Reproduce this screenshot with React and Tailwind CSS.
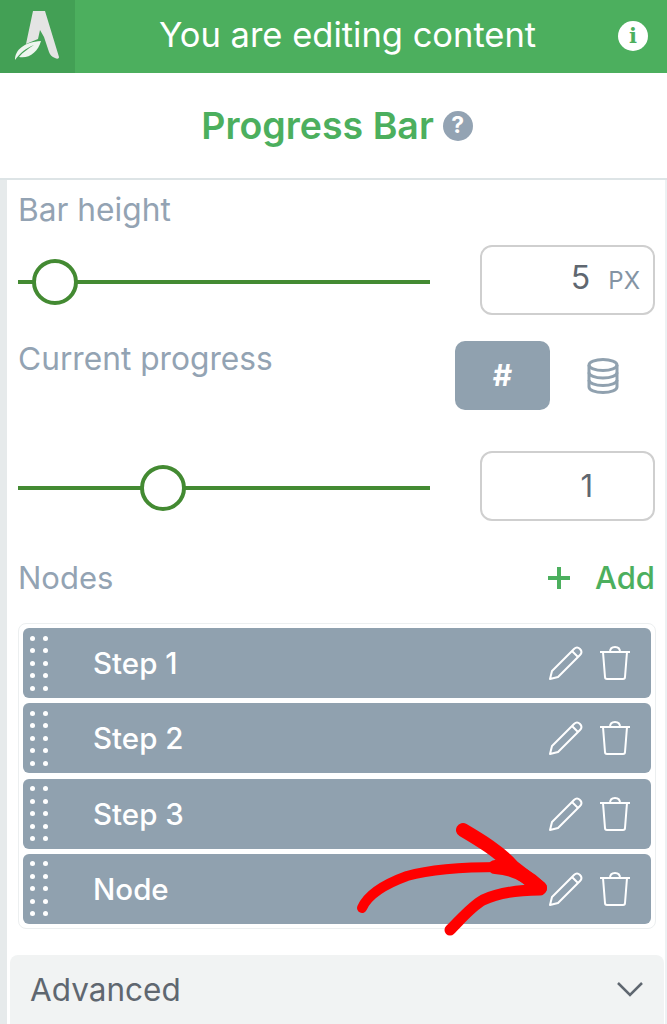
import React from 'react';

const nodes = ['Step 1', 'Step 2', 'Step 3', 'Node'];

const Logo = () => (
  <svg width="75" height="73" viewBox="0 0 75 73">
    <path d="M33 11H45L59 57C59 59 57 59 55 58C52 57 50 55 49 52L44 37L40 30L38 39L26 44Z" fill="#e4e4e4" />
    <path d="M15 60C15 50 24 42 41 41C38 52 29 59 19 57C23 52 28 49 34 45C26 48 20 53 15 60Z" fill="#eef5ef" />
  </svg>
);

const Slider = ({ left }) => (
  <div className="relative w-[412px] h-[4px] mt-[4px] bg-[#438a32]">
    <div className={`absolute top-[-21px] ${left} w-[46px] h-[46px] rounded-full bg-white border-[4px] border-[#438a32]`} />
  </div>
);

const Pencil = () => (
  <svg width="36" height="36" viewBox="0 0 36 36" fill="none" stroke="white" strokeWidth="2" strokeLinejoin="round">
    <path d="M2 34L4 26L26 4C28 2 30 2 32 4C34 6 34 8 32 10L10 32Z" />
    <path d="M24 6L30 12" />
  </svg>
);

const Trash = () => (
  <svg width="32" height="34" viewBox="0 0 32 34" fill="none" stroke="white" strokeWidth="2" strokeLinejoin="round">
    <path d="M1 6H31" />
    <path d="M4 6L6 31C6 32 7 33 8 33H24C25 33 26 32 26 31L28 6" />
    <path d="M11 6C11 2 13 1 16 1C19 1 21 2 21 6" />
  </svg>
);

const Dots = () => (
  <div className="grid grid-cols-2 gap-x-[8px] gap-y-[7.5px] w-[18px]">
    {Array.from({ length: 10 }).map((_, i) => (
      <span key={i} className="w-[5px] h-[5px] rounded-full bg-white" />
    ))}
  </div>
);

const App = () => {
  return (
    <div className="relative w-[667px] h-[1024px] overflow-hidden bg-white font-['Inter',sans-serif]">
      {/* Top bar */}
      <div className="flex items-center h-[73px] bg-[#4caf5e]">
        <div className="w-[75px] h-full bg-[#43a055]">
          <Logo />
        </div>
        <div className="flex-1 pl-[84px] pb-[3px] text-[34.5px] text-white leading-none">You are editing content</div>
        <div className="flex items-center justify-center w-[30px] h-[30px] mr-[19px] mb-[2px] rounded-full bg-white font-['DejaVu_Serif',serif] font-bold text-[21px] text-[#4caf5e] leading-none">i</div>
      </div>

      {/* Title */}
      <div className="flex items-center justify-center gap-[9px] h-[105px] border-b-2 border-[#dde4e6] box-content -mb-[2px] pl-[7px]">
        <span className="text-[37.5px] font-semibold text-[#4caf5e] leading-none">Progress Bar</span>
        <span className="flex items-center justify-center w-[30px] h-[30px] rounded-full bg-[#93a3b3] text-white text-[23px] font-bold leading-none">?</span>
      </div>

      {/* Panel */}
      <div className="flex h-[846px] mt-[2px] border-r-2 border-[#edf1f3]">
        <div className="w-[7px] shrink-0 bg-[#e6eaeb]" />
        <div className="flex flex-col w-[637px] ml-[11px]">
          <div className="mt-[12px] text-[31.7px] text-[#93a3b3] leading-[36px]">Bar height</div>

          <div className="flex items-center justify-between mt-[17px]">
            <Slider left="left-[14px]" />
            <div className="flex items-baseline justify-end gap-[18px] w-[175px] h-[70px] pt-[11px] pr-[13px] border-2 border-[#cfcfcf] rounded-[12px] text-[#5f6770]">
              <span className="text-[32px] leading-[40px]">5</span>
              <span className="text-[24px] text-[#8494a4]">PX</span>
            </div>
          </div>

          <div className="flex justify-between mt-[26px]">
            <div className="text-[31.7px] text-[#93a3b3] leading-[36px]">Current progress</div>
            <div className="flex items-center">
              <div className="flex items-center justify-center w-[95px] h-[69px] rounded-[10px] bg-[#90a1af] text-white text-[30px] font-bold">#</div>
              <div className="flex items-center justify-center w-[105px] h-[69px]">
                <svg width="32" height="36" viewBox="0 0 32 36" fill="none" stroke="#90a1af" strokeWidth="3">
                  <ellipse cx="16" cy="7" rx="14" ry="5.5" />
                  <path d="M2 7V29C2 32 8 34.500 16 34.500C24 34.500 30 32 30 29V7" />
                  <path d="M2 14.500C2 17.500 8 20 16 20C24 20 30 17.500 30 14.500" />
                  <path d="M2 22C2 25 8 27.500 16 27.500C24 27.500 30 25 30 22" />
                </svg>
              </div>
            </div>
          </div>

          <div className="flex items-center justify-between mt-[41px]">
            <Slider left="left-[122px]" />
            <div className="flex items-center justify-end w-[175px] h-[70px] pr-[60px] border-2 border-[#cfcfcf] rounded-[12px] text-[31px] text-[#5f6770]">1</div>
          </div>

          <div className="flex items-center justify-between mt-[39px] h-[36px]">
            <div className="text-[31px] text-[#93a3b3]">Nodes</div>
            <div className="flex items-center gap-[23px] text-[#4caf5e]">
              <svg width="26" height="26" viewBox="0 0 26 26" stroke="#4caf5e" strokeWidth="4">
                <path d="M13 2V24M2 13H24" />
              </svg>
              <span className="text-[31px] font-medium">Add</span>
            </div>
          </div>

          {/* Node list */}
          <div className="flex flex-col gap-[5.33px] w-[638px] mt-[27px] p-[4px] border border-[#eceff0] rounded-[8px]">
            {nodes.map((n) => (
              <div key={n} className="flex items-center h-[70px] pl-[7px] pr-[20px] rounded-[6px] bg-[#90a1af]">
                <Dots />
                <span className="ml-[45px] flex-1 text-[29.5px] font-medium text-white">{n}</span>
                <div className="flex items-center gap-[15px]">
                  <Pencil />
                  <Trash />
                </div>
              </div>
            ))}
          </div>

          <div className="flex items-center justify-between h-[69px] w-[654px] -ml-[8px] mt-[26px] pl-[20px] pr-[21px] rounded-t-[8px] bg-[#f1f3f3]">
            <span className="text-[31.5px] text-[#5f6770]">Advanced</span>
            <svg width="26" height="16" viewBox="0 0 26 16" fill="none" stroke="#5f6770" strokeWidth="2.500">
              <path d="M1 2L13 14L25 2" />
            </svg>
          </div>
        </div>
      </div>

      {/* Red annotation arrow */}
      <svg className="absolute left-[340px] top-[800px]" width="210" height="140" viewBox="0 0 210 140" fill="none" stroke="#ff0000" strokeLinecap="round" strokeLinejoin="round">
        <path d="M22 108C28 94 45 84 67 76C95 68 130 67 160 67" strokeWidth="10" />
        <path d="M155 67C175 68 190 78 200 88" strokeWidth="14" />
        <path d="M123 30C140 40 160 52 173 67L200 88" strokeWidth="14" />
        <path d="M110 130C122 118 132 106 143 100C160 92 180 90 200 90" strokeWidth="11" />
      </svg>
    </div>
  );
};

export default App;
